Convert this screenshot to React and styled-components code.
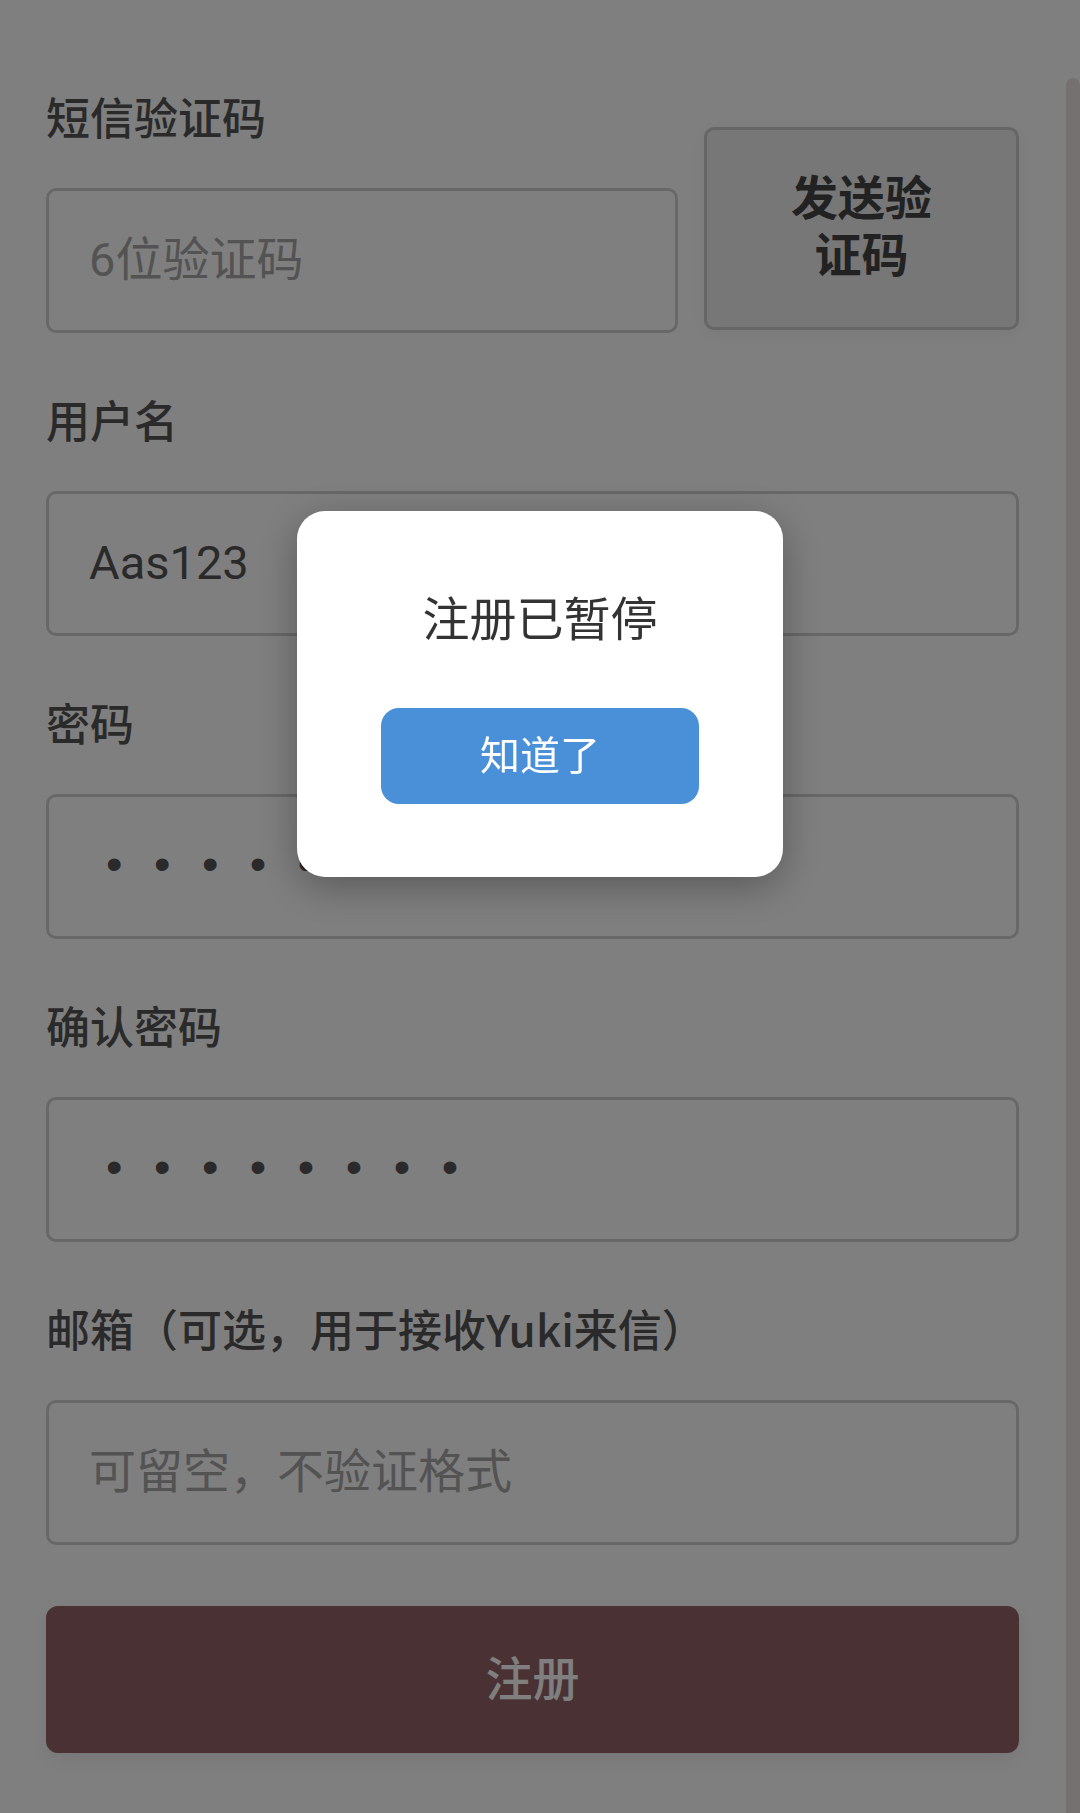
import React from "react";
import styled, { createGlobalStyle } from "styled-components";

const GlobalStyle = createGlobalStyle`
  html, body {
    margin: 0;
    padding: 0;
    background: #ffffff;
  }
  body {
    font-family: "Noto Sans CJK SC", "Noto Sans", sans-serif;
  }
  * { box-sizing: border-box; }
`;

const Page = styled.div`
  position: relative;
  min-height: 100vh;
  padding: 83px 61px 60px 46px;
  background: #ffffff;
`;

const Form = styled.form`
  display: flex;
  flex-direction: column;
  gap: 53px;
  margin: 0;
`;

const SmsRow = styled.div`
  display: flex;
  align-items: flex-end;
  gap: 26px;
`;

const Field = styled.div`
  display: flex;
  flex-direction: column;
  flex: ${(p) => (p.$grow ? "1 1 auto" : "none")};
  min-width: 0;
`;

const Label = styled.label`
  font-family: "Noto Sans CJK SC", sans-serif;
  font-size: 44px;
  line-height: 66px;
  font-weight: 500;
  color: #555555;
  margin-bottom: 39px;
`;

const Input = styled.input`
  width: 100%;
  height: 145px;
  border: 3px solid #d0d0d0;
  border-radius: 10px;
  background: #ffffff;
  padding: ${(p) => (p.$secret ? "0 0 6px 57px" : "0 0 3px 40px")};
  font-family: ${(p) =>
    p.$secret ? '"Liberation Sans", Arial, sans-serif' : 'Roboto, "Noto Sans CJK SC", sans-serif'};
  font-size: 47px;
  letter-spacing: ${(p) => (p.$secret ? "31.5px" : "normal")};
  color: #555555;
  outline: none;

  &::placeholder {
    color: #a6a6a6;
    opacity: 1;
  }
`;

const SendButton = styled.button`
  flex: none;
  width: 315px;
  height: 203px;
  margin-bottom: 3px;
  padding: 0 70px 12px;
  border: 3px solid #cccccc;
  border-radius: 10px;
  background: #eeeeee;
  color: #444444;
  font-family: "Noto Sans CJK SC", sans-serif;
  font-size: 47px;
  line-height: 57px;
  font-weight: 700;
  box-shadow: 0 4px 18px rgba(0, 0, 0, 0.06);
`;

const RegisterButton = styled.button`
  margin-top: 8px;
  width: 100%;
  height: 147px;
  padding: 0 0 9px;
  border: none;
  border-radius: 12px;
  background: #946468;
  color: #ffffff;
  font-family: "Noto Sans CJK SC", sans-serif;
  font-size: 47px;
  font-weight: 500;
  box-shadow: 0 6px 20px rgba(0, 0, 0, 0.08);
`;

const ScrollThumb = styled.div`
  position: absolute;
  top: 78px;
  right: 0;
  bottom: 0;
  width: 14px;
  border-radius: 7px 7px 0 0;
  background: #ebe3e3;
`;

const Overlay = styled.div`
  position: fixed;
  inset: 0;
  background: rgba(0, 0, 0, 0.5);
  display: flex;
  justify-content: center;
  align-items: flex-start;
  padding-top: 511px;
`;

const Dialog = styled.div`
  width: 486px;
  background: #ffffff;
  border-radius: 28px;
  padding: 69px 0 73px;
  display: flex;
  flex-direction: column;
  align-items: center;
  box-shadow: 0 10px 40px rgba(0, 0, 0, 0.3);
`;

const DialogTitle = styled.h2`
  margin: 0 0 56px;
  font-family: "Noto Sans CJK SC", sans-serif;
  font-size: 47px;
  line-height: 72px;
  font-weight: 400;
  color: #333333;
`;

const OkButton = styled.button`
  width: 318px;
  height: 96px;
  padding: 0 0 6px;
  border: none;
  border-radius: 18px;
  background: #4a90d9;
  color: #ffffff;
  font-family: "Noto Sans CJK SC", sans-serif;
  font-size: 40px;
  font-weight: 400;
`;

export default function App() {
  return (
    <>
      <GlobalStyle />
      <Page>
        <Form onSubmit={(e) => e.preventDefault()}>
          <SmsRow>
            <Field $grow>
              <Label>短信验证码</Label>
              <Input type="text" placeholder="6位验证码" readOnly />
            </Field>
            <SendButton type="button">发送验证码</SendButton>
          </SmsRow>
          <Field>
            <Label>用户名</Label>
            <Input type="text" defaultValue="Aas123" readOnly />
          </Field>
          <Field>
            <Label>密码</Label>
            <Input type="password" defaultValue="Aas12345" $secret readOnly />
          </Field>
          <Field>
            <Label>确认密码</Label>
            <Input type="password" defaultValue="Aas12345" $secret readOnly />
          </Field>
          <Field>
            <Label>邮箱（可选，用于接收Yuki来信）</Label>
            <Input type="text" placeholder="可留空，不验证格式" readOnly />
          </Field>
          <RegisterButton type="button">注册</RegisterButton>
        </Form>
        <ScrollThumb />
      </Page>
      <Overlay>
        <Dialog role="dialog">
          <DialogTitle>注册已暂停</DialogTitle>
          <OkButton type="button">知道了</OkButton>
        </Dialog>
      </Overlay>
    </>
  );
}
